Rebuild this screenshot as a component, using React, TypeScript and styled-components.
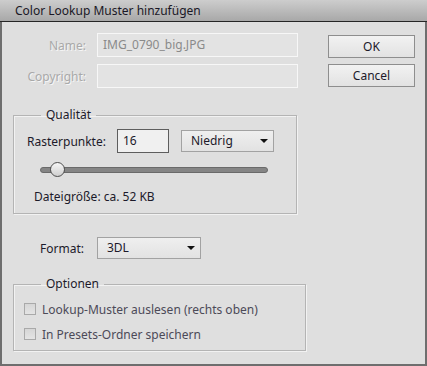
import React from 'react'
import styled, { createGlobalStyle } from 'styled-components'

const GlobalStyle = createGlobalStyle`
  html, body {
    margin: 0;
    padding: 0;
    background: #dfdfdf;
  }
  body {
    font-family: "Noto Sans", "Open Sans", sans-serif;
    font-size: 12px;
    color: #1c1a2a;
  }
`

const Window = styled.div`
  width: 427px;
  height: 366px;
  box-sizing: border-box;
  display: flex;
  flex-direction: column;
  background: #dfdfdf;
  border: 2px solid #6e6e6e;
  border-top: none;
`

const TitleBar = styled.div`
  height: 21px;
  display: flex;
  align-items: center;
  padding-left: 15px;
  margin: 0 -2px;
  background: linear-gradient(#cdcdcd, #a8a8a8);
  border-bottom: 1px solid #262626;
  font-size: 12px;
  color: #1a1826;
`

const Body = styled.div`
  flex: 1;
  display: flex;
  padding: 11px 10px 10px 11px;
  box-sizing: border-box;
`

const Main = styled.div`
  display: flex;
  flex-direction: column;
`

const Side = styled.div`
  display: flex;
  flex-direction: column;
  gap: 6px;
  margin-left: auto;
  padding-top: 2px;
`

const FieldRow = styled.div<{ $gap?: number }>`
  display: flex;
  align-items: center;
  height: 24px;
  margin-bottom: ${p => p.$gap ?? 0}px;
`

const FieldLabel = styled.span<{ $disabled?: boolean; $width: number; $align?: string }>`
  width: ${p => p.$width}px;
  flex: none;
  text-align: ${p => p.$align ?? 'left'};
  color: ${p => (p.$disabled ? '#a9a9a9' : '#1c1a2a')};
  text-shadow: ${p => (p.$disabled ? '1px 1px 0 #f6f6f6' : 'none')};
`

const TextBox = styled.div<{ $width: number; $active?: boolean }>`
  width: ${p => p.$width}px;
  height: 24px;
  box-sizing: border-box;
  display: flex;
  align-items: center;
  padding: 0 5px 2px;
  background: ${p => (p.$active ? '#f0f0f0' : '#e3e3e3')};
  border: 1px solid ${p => (p.$active ? '#5e5e5e' : '#f7f7f7')};
  color: ${p => (p.$active ? '#1c1a2a' : '#8a8a8a')};
`

const Button = styled.div`
  width: 87px;
  height: 23px;
  box-sizing: border-box;
  display: flex;
  align-items: center;
  justify-content: center;
  background: linear-gradient(#f2f2f2, #e2e2e2);
  border: 1px solid #8e8e8e;
  color: #1c1a2a;
`

const Group = styled.fieldset<{ $width: number }>`
  width: ${p => p.$width}px;
  box-sizing: border-box;
  margin: 0;
  padding: 0 0 8px 13px;
  border: 1px solid #b4b4b4;
  box-shadow: inset 1px 1px 0 #f2f2f2, 1px 1px 0 #f2f2f2;
`

const Legend = styled.legend`
  margin-left: 14px;
  padding: 0 5px;
  line-height: 16px;
`

const Select = styled.div<{ $width: number; $height?: number }>`
  width: ${p => p.$width}px;
  height: ${p => p.$height ?? 22}px;
  box-sizing: border-box;
  display: flex;
  align-items: center;
  padding: 0 5px 1px 9px;
  background: linear-gradient(#efefef, #e2e2e2);
  border: 1px solid #a2a2a2;
  color: #1c1a2a;
`

const Arrow = styled.span`
  margin-left: auto;
  width: 0;
  height: 0;
  border-left: 4px solid transparent;
  border-right: 4px solid transparent;
  border-top: 4px solid #111;
`

const SliderRow = styled.div`
  position: relative;
  width: 228px;
  height: 16px;
  margin: 9px 0 0 13px;
  display: flex;
  align-items: center;
`

const Track = styled.div`
  flex: 1;
  height: 4px;
  background: #858585;
  border: 1px solid #6a6a6a;
  border-radius: 3px;
`

const Thumb = styled.div`
  position: absolute;
  top: 0;
  width: 15px;
  height: 15px;
  box-sizing: border-box;
  border-radius: 50%;
  border: 1px solid #4e4e4e;
  background: linear-gradient(#f6f6f6, #cfcfcf);
`

const Note = styled.div`
  margin: 11px 0 0 7px;
  line-height: 16px;
`

const CheckRow = styled.label`
  display: flex;
  align-items: center;
  height: 16px;
  gap: 6px;
  margin-left: -3px;
  color: #4c4a58;
`

const CheckBox = styled.span`
  width: 12px;
  height: 12px;
  box-sizing: border-box;
  border: 1px solid #a9a9a9;
  background: linear-gradient(#d6d6d6, #e4e4e4);
`

const CheckList = styled.div`
  display: flex;
  flex-direction: column;
  gap: 9px;
  padding-top: 9px;
`

export default function App() {
  const sliderPos = 0.045
  return (
    <>
      <GlobalStyle />
      <Window>
        <TitleBar>Color Lookup Muster hinzufügen</TitleBar>
        <Body>
          <Main>
            <FieldRow $gap={7}>
              <FieldLabel $disabled $width={73} $align="right">Name:</FieldLabel>
              <span style={{ width: 11 }} />
              <TextBox $width={201}>IMG_0790_big.JPG</TextBox>
            </FieldRow>
            <FieldRow $gap={19}>
              <FieldLabel $disabled $width={73} $align="right">Copyright:</FieldLabel>
              <span style={{ width: 11 }} />
              <TextBox $width={201} />
            </FieldRow>

            <Group $width={284}>
              <Legend>Qualität</Legend>
              <FieldRow style={{ marginTop: 6 }}>
                <FieldLabel $width={90}>Rasterpunkte:</FieldLabel>
                <TextBox $width={52} $active>16</TextBox>
                <span style={{ width: 12 }} />
                <Select $width={93}>
                  Niedrig
                  <Arrow />
                </Select>
              </FieldRow>
              <SliderRow>
                <Track />
                <Thumb style={{ left: `${sliderPos * 228}px` }} />
              </SliderRow>
              <Note>Dateigröße: ca. 52 KB</Note>
            </Group>

            <FieldRow style={{ margin: '22px 0 16px' }}>
              <FieldLabel $width={84} style={{ paddingLeft: 27, boxSizing: 'border-box' }}>Format:</FieldLabel>
              <Select $width={104}>
                3DL
                <Arrow />
              </Select>
            </FieldRow>

            <Group $width={293}>
              <Legend>Optionen</Legend>
              <CheckList>
                <CheckRow>
                  <CheckBox />
                  Lookup-Muster auslesen (rechts oben)
                </CheckRow>
                <CheckRow>
                  <CheckBox />
                  In Presets-Ordner speichern
                </CheckRow>
              </CheckList>
            </Group>
          </Main>
          <Side>
            <Button>OK</Button>
            <Button>Cancel</Button>
          </Side>
        </Body>
      </Window>
    </>
  )
}
